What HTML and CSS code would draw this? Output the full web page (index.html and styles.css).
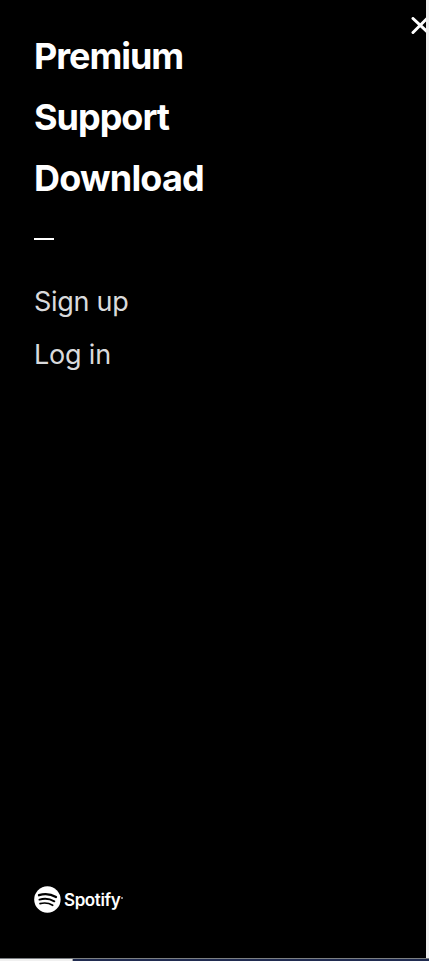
FILE: index.html
```
<!DOCTYPE html>
<html lang="en">
<head>
<meta charset="utf-8">
<title>Spotify menu</title>
<link rel="stylesheet" href="styles.css">
</head>
<body>
<div class="shell">
  <aside class="menu">
    <nav>
      <ul class="primary">
        <li><a class="premium">Premium</a></li>
        <li><a class="support">Support</a></li>
        <li><a class="download">Download</a></li>
      </ul>
      <div class="divider"></div>
      <ul class="secondary">
        <li><a class="signup">Sign up</a></li>
        <li><a class="login">Log in</a></li>
      </ul>
    </nav>
    <div class="logo">
      <svg width="27" height="27" viewBox="0 0 27 27" aria-hidden="true">
        <circle cx="13.4" cy="13.5" r="13.2" fill="#fff"/>
        <g fill="none" stroke="#000" stroke-linecap="round">
          <path d="M5 9.2C10.5 7.6 17 8.2 22 11" stroke-width="2.3"/>
          <path d="M5.5 13.6C10.3 12.2 16 12.8 20.3 15.3" stroke-width="2"/>
          <path d="M6 17.6C10.3 16.5 15 17 18.7 19.3" stroke-width="1.6"/>
        </g>
      </svg>
      <span class="wordmark">Spotify</span><span class="dot"></span>
    </div>
    <svg class="close" width="15" height="18" viewBox="0 0 15 18" aria-hidden="true">
      <path d="M2 1.5l15 14M16 1.5L2 15.5" fill="none" stroke="#fff" stroke-width="3" stroke-linecap="round"/>
    </svg>
  </aside>
  <div class="edge"></div>
</div>
<div class="taskbar"><div class="field"></div></div>
</body>
</html>
```
FILE: styles.css
```
* { box-sizing: border-box; }
body {
  margin: 0;
  height: 961px;
  overflow: hidden;
  background: #000;
  color: #fff;
  font-family: Inter, "Liberation Sans", sans-serif;
}
.shell { display: flex; height: 958px; }
.menu {
  position: relative;
  width: 426px;
  padding: 26px 34px 44px;
  display: flex;
  flex-direction: column;
  justify-content: space-between;
}
ul { margin: 0; padding: 0; list-style: none; }
.primary li {
  height: 61px;
  line-height: 61px;
  font-size: 36px;
  font-weight: 700;
}
.premium { letter-spacing: -1.05px; }
.support { letter-spacing: -1px; }
.download { letter-spacing: -0.8px; }
.divider { width: 20px; height: 2px; margin-top: 29px; background: #fff; }
.secondary { margin-top: 35px; color: #d9dadc; }
.secondary li { height: 53px; line-height: 53px; font-size: 27px; }
.signup { letter-spacing: -0.3px; }
.login { letter-spacing: -0.2px; }
.logo { display: flex; align-items: center; height: 29px; }
.logo svg { flex: none; }
.wordmark { margin: 2px 0 0 3px; font-size: 17px; font-weight: 600; line-height: 27px; letter-spacing: -0.4px; }
.dot { width: 2px; height: 2px; margin: -3px 0 0 1px; background: #888; }
.close { position: absolute; top: 17px; right: 0; }
.edge { width: 3px; background: #f0f0f0; }
.taskbar { height: 3px; border-top: 1px solid #7b7f82; background: #202b50; }
.field { width: 73px; height: 2px; background: #f0f0f0; border-right: 1px solid #aaa; }
```
